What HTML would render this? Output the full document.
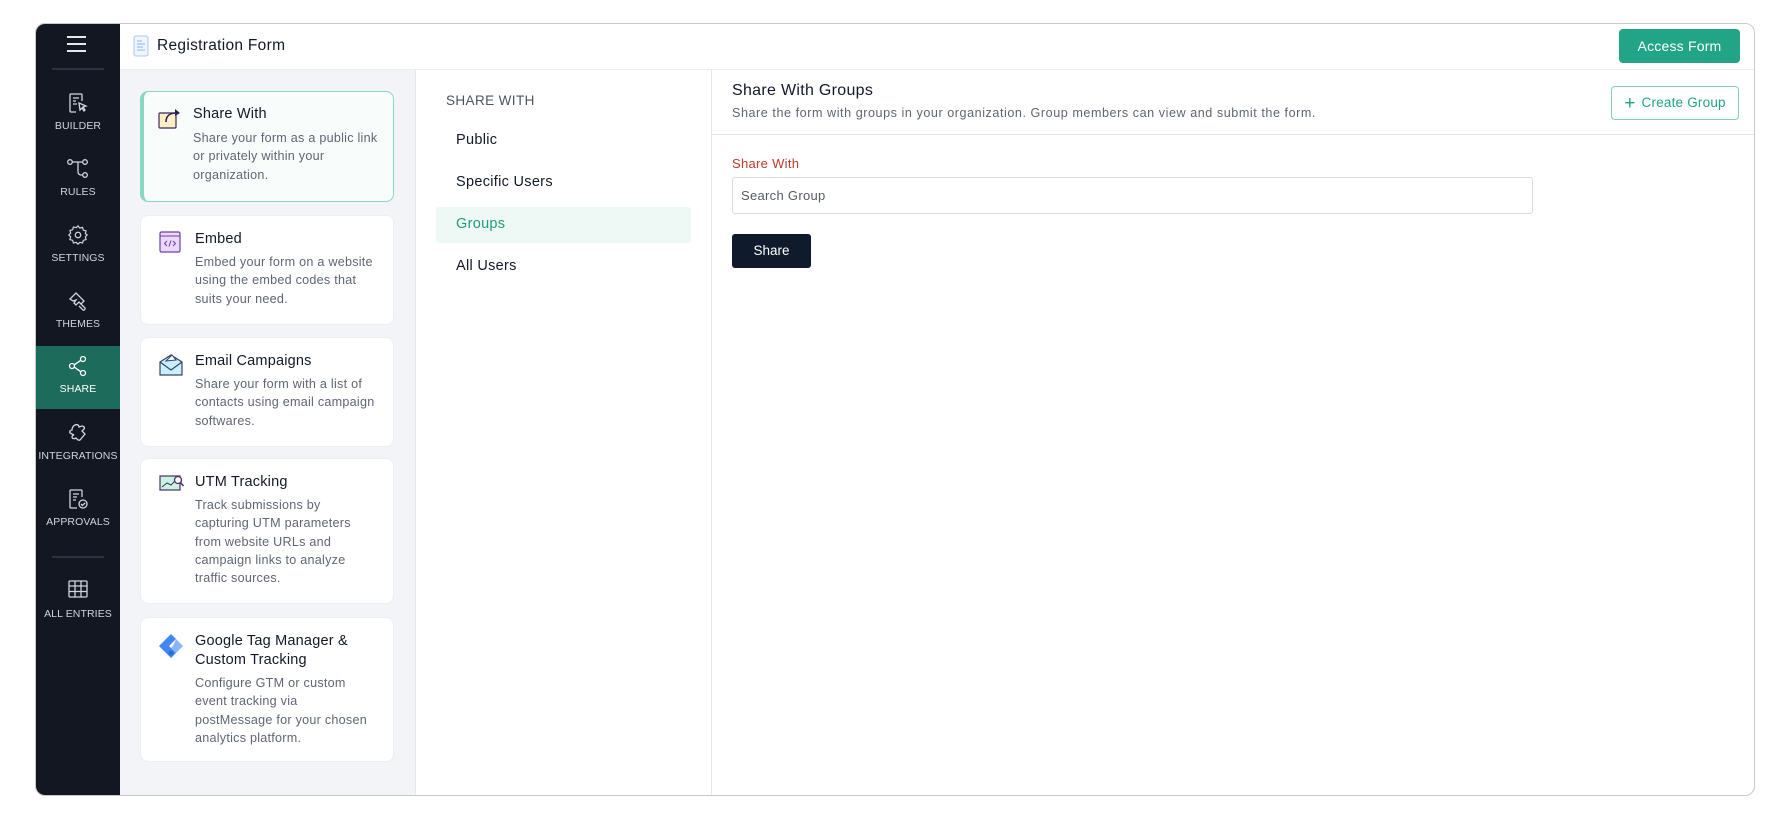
<!DOCTYPE html>
<html><head><meta charset="utf-8"><style>
*{box-sizing:border-box;margin:0;padding:0}
body{width:1791px;height:821px;background:#fff;font-family:"Liberation Sans",sans-serif;position:relative;overflow:hidden;color:#111827}
.frame{position:absolute;left:35px;top:23px;width:1720px;height:773px;border:1px solid #c9c9c9;border-radius:10px;overflow:hidden;background:#fff}
.side{position:absolute;left:0;top:0;width:84px;height:100%;background:#121722}
.abs{position:absolute}
.si{position:absolute;left:0;width:84px;text-align:center;color:#d1d5db;font-size:10.5px;letter-spacing:.1px}
.si svg{display:block;margin:0 auto}
.si .l{position:absolute;left:0;width:84px;text-align:center}
.card{position:absolute;left:104px;width:254px;background:#fff;border-radius:8px;border:1px solid #eceef1}
.card .t{position:absolute;left:54px;font-size:14.5px;color:#111827;line-height:19px;white-space:nowrap;letter-spacing:.2px}
.card .d{position:absolute;left:54px;font-size:12.6px;color:#5f6673;line-height:18.3px;white-space:nowrap;letter-spacing:.25px}
.card svg{position:absolute;left:18px}
.mi{position:absolute;left:420px;font-size:14.5px;color:#111827;letter-spacing:.3px}
</style></head><body>
<div class="frame">
 <div class="side">
  <div class="abs" style="left:31px;top:12px;width:19px;height:2px;background:#e5e7eb"></div>
  <div class="abs" style="left:31px;top:19px;width:19px;height:2px;background:#e5e7eb"></div>
  <div class="abs" style="left:31px;top:26px;width:19px;height:2px;background:#e5e7eb"></div>
  <div class="abs" style="left:16px;top:44px;width:52px;height:2px;background:#2d3340"></div>

  <div class="si" style="top:68px"><svg width="22" height="22" viewBox="0 0 22 22" fill="none" stroke="#d1d5db" stroke-width="1.3"><path d="M15 9V3a1 1 0 0 0-1-1H4a1 1 0 0 0-1 1v16a1 1 0 0 0 1 1h5"/><path d="M6 6h6M6 9h3M6 12h4"/><path d="M12 11l7 3-3 1 2 3-1 1-2-3-2 2z"/></svg><div class="l" style="top:28px">BUILDER</div></div>
  <div class="si" style="top:134px"><svg width="24" height="22" viewBox="0 0 24 22" fill="none" stroke="#d1d5db" stroke-width="1.3"><circle cx="4" cy="4" r="2.3"/><circle cx="19" cy="4" r="2.3"/><circle cx="19" cy="17" r="2.3"/><path d="M6.3 4h10.4M12 4v10a3 3 0 0 0 3 3h1.7"/></svg><div class="l" style="top:28px">RULES</div></div>
  <div class="si" style="top:200px"><svg width="22" height="22" viewBox="0 0 24 24" fill="none" stroke="#d1d5db" stroke-width="1.3"><circle cx="12" cy="12" r="3"/><path d="M12 2l2 2.5 3-.8.8 3 3 .8-.8 3L22 12l-2 2 .8 3-3 .8-.8 3-3-.8L12 22l-2-2-3 .8-.8-3-3-.8.8-3L2 12l2-2-.8-3 3-.8.8-3 3 .8z"/></svg><div class="l" style="top:28px">SETTINGS</div></div>
  <div class="si" style="top:266px"><svg width="22" height="22" viewBox="0 0 22 22" fill="none" stroke="#d1d5db" stroke-width="1.3"><path d="M3 9l6-6 8 8-3 3-2-2-3 3-2-2 2-3-3 1z"/><path d="M14 14l4 4a1.5 1.5 0 0 1-2 2l-4-4"/></svg><div class="l" style="top:28px">THEMES</div></div>
  <div class="abs" style="left:0;top:322px;width:84px;height:63px;background:#1c6b5b"></div>
  <div class="si" style="top:331px;color:#fff"><svg width="22" height="22" viewBox="0 0 22 22" fill="none" stroke="#fff" stroke-width="1.3"><circle cx="16" cy="4" r="2.5"/><circle cx="5" cy="11" r="2.5"/><circle cx="16" cy="18" r="2.5"/><path d="M7.3 9.8l6.5-4.5M7.3 12.2l6.5 4.5"/></svg><div class="l" style="top:28px">SHARE</div></div>
  <div class="si" style="top:398px"><svg width="22" height="22" viewBox="0 0 22 22" fill="none" stroke="#d1d5db" stroke-width="1.3"><path d="M8 3c2-1 4 0 4 2l3-1c2 0 3 2 2 3l-2 2 3 3-5 6c-2 1-3-1-4-2-1 1-4 1-4-1 0-1 1-2 2-2L3 11c-1-2 1-3 2-3 0-2 1-4 3-5z"/></svg><div class="l" style="top:28px">INTEGRATIONS</div></div>
  <div class="si" style="top:464px"><svg width="22" height="22" viewBox="0 0 22 22" fill="none" stroke="#d1d5db" stroke-width="1.3"><path d="M15 9V3a1 1 0 0 0-1-1H4a1 1 0 0 0-1 1v16a1 1 0 0 0 1 1h6"/><path d="M6 6h6M6 9h4M6 12h3"/><circle cx="16" cy="16" r="4"/><path d="M14 16l1.5 1.5L18 15"/></svg><div class="l" style="top:28px">APPROVALS</div></div>
  <div class="abs" style="left:16px;top:532px;width:52px;height:2px;background:#2d3340"></div>
  <div class="si" style="top:554px"><svg width="22" height="22" viewBox="0 0 22 22" fill="none" stroke="#d1d5db" stroke-width="1.3"><rect x="2" y="3" width="18" height="16" rx="1"/><path d="M2 8h18M2 13.5h18M8 3v16M14 3v16"/></svg><div class="l" style="top:30px">ALL ENTRIES</div></div>
 </div>

 <div class="abs" style="left:84px;top:0;right:0;height:46px;border-bottom:1px solid #eceef1;background:#fff"></div>
 <svg class="abs" style="left:97px;top:11px" width="16" height="22" viewBox="0 0 16 22"><rect x="1" y="1" width="14" height="20" rx="2" fill="#eef5ff" stroke="#a9c8f5"/><path d="M4 6h5M4 9h8M4 12h6M4 15h8" stroke="#8fb5ee"/></svg>
 <div class="abs" style="left:121px;top:13px;font-size:15.5px;color:#111827;letter-spacing:.3px">Registration Form</div>
 <div class="abs" style="left:1583px;top:5px;width:121px;height:34px;background:#22a586;border-radius:4px;color:#fff;font-size:14px;line-height:34px;text-align:center;letter-spacing:.2px">Access Form</div>

 <div class="abs" style="left:84px;top:46px;width:296px;bottom:0;background:#f3f4f7;border-right:1px solid #e5e7eb"></div>
 <div class="card" style="top:67px;height:111px;background:#f8fdfb;border:1.5px solid #8ad6c1;border-left:4px solid #8ad6c1">
  <svg style="top:14px;left:14px" width="26" height="24" viewBox="0 0 26 24"><rect x="1" y="7" width="17" height="15" rx="1" fill="#fdeec4" stroke="#3b2a5a" stroke-width="1.2"/><path d="M8 16c0-6 4-9 10-9" fill="none" stroke="#2a1f5e" stroke-width="1.6"/><path d="M17 3l5 4-5 3z" fill="#2a1f5e"/></svg>
  <div class="t" style="top:13px;left:49px">Share With</div>
  <div class="d" style="top:37px;left:49px">Share your form as a public link<br>or privately within your<br>organization.</div>
 </div>
 <div class="card" style="top:191px;height:110px">
  <svg style="top:15px" width="22" height="22" viewBox="0 0 22 22"><rect x="1" y="1" width="20" height="20" rx="1.5" fill="#ead9fb" stroke="#6d3fa3" stroke-width="1.2"/><path d="M1 5h20" stroke="#6d3fa3"/><path d="M8 10l-2.5 2.5L8 15M14 10l2.5 2.5L14 15M12 9.5l-2 6" fill="none" stroke="#6d3fa3" stroke-width="1"/></svg>
  <div class="t" style="top:14px">Embed</div>
  <div class="d" style="top:37px">Embed your form on a website<br>using the embed codes that<br>suits your need.</div>
 </div>
 <div class="card" style="top:313px;height:110px">
  <svg style="top:13px" width="24" height="26" viewBox="0 0 24 26"><path d="M1 11l11-7 11 7v13H1z" fill="#cbeefb" stroke="#33466e" stroke-width="1.2"/><path d="M7 10l6-6 4 5z" fill="#fff" stroke="#33466e"/><path d="M1 11l11 8 11-8" fill="none" stroke="#33466e" stroke-width="1.2"/></svg>
  <div class="t" style="top:14px">Email Campaigns</div>
  <div class="d" style="top:37px">Share your form with a list of<br>contacts using email campaign<br>softwares.</div>
 </div>
 <div class="card" style="top:434px;height:146px">
  <svg style="top:15px" width="26" height="20" viewBox="0 0 26 20"><rect x="1" y="2" width="20" height="14" fill="#c9f3df" stroke="#4b2f6b" stroke-width="1.2"/><path d="M3 13l5-4 4 2 5-5" fill="none" stroke="#4b2f6b"/><circle cx="19" cy="6" r="3.5" fill="#fff" stroke="#4b2f6b" stroke-width="1.3"/><path d="M21.5 8.5l3 3.5" stroke="#4b2f6b" stroke-width="1.5"/></svg>
  <div class="t" style="top:14px">UTM Tracking</div>
  <div class="d" style="top:37px">Track submissions by<br>capturing UTM parameters<br>from website URLs and<br>campaign links to analyze<br>traffic sources.</div>
 </div>
 <div class="card" style="top:593px;height:145px">
  <svg style="top:15px;left:17px" width="26" height="26" viewBox="0 0 26 26"><path d="M13 1l5 5-7 7 7 7-5 5-12-12z" fill="#4285f4"/><path d="M18 6l7 7-7 7-5-5 2-2z" fill="#8ab4f8"/><circle cx="13" cy="20" r="2.5" fill="#246fdb"/></svg>
  <div class="t" style="top:14px">Google Tag Manager &amp;<br>Custom Tracking</div>
  <div class="d" style="top:56px">Configure GTM or custom<br>event tracking via<br>postMessage for your chosen<br>analytics platform.</div>
 </div>

 <div class="abs" style="left:380px;top:46px;width:296px;bottom:0;border-right:1px solid #e5e7eb"></div>
 <div class="abs" style="left:410px;top:69px;font-size:13.5px;color:#4b5563;letter-spacing:.4px">SHARE WITH</div>
 <div class="mi" style="top:108px">Public</div>
 <div class="mi" style="top:150px">Specific Users</div>
 <div class="abs" style="left:400px;top:183px;width:255px;height:36px;background:#eef8f4;border-radius:3px"></div>
 <div class="mi" style="top:192px;color:#229b7c">Groups</div>
 <div class="mi" style="top:234px">All Users</div>

 <div class="abs" style="left:696px;top:58px;font-size:16px;color:#111827;letter-spacing:.3px">Share With Groups</div>
 <div class="abs" style="left:696px;top:82px;font-size:12.6px;color:#5f6673;letter-spacing:.55px">Share the form with groups in your organization. Group members can view and submit the form.</div>
 <div class="abs" style="left:1575px;top:62px;width:128px;height:34px;border:1.5px solid #7fcfba;border-radius:4px;color:#22a586;font-size:13.5px;line-height:31px;text-align:center;letter-spacing:.2px"><span style="font-size:19px;vertical-align:-2px;margin-right:6px">+</span>Create Group</div>
 <div class="abs" style="left:676px;top:110px;right:0;height:1px;background:#e5e7eb"></div>
 <div class="abs" style="left:696px;top:132px;font-size:13px;color:#c0392b;letter-spacing:.3px">Share With</div>
 <div class="abs" style="left:696px;top:153px;width:801px;height:37px;border:1px solid #d8dbe0;border-radius:3px;font-size:13px;color:#555b66;line-height:35px;padding-left:8px;letter-spacing:.3px">Search Group</div>
 <div class="abs" style="left:696px;top:210px;width:79px;height:34px;background:#0f1a2c;border-radius:3px;color:#fff;font-size:13.5px;line-height:34px;text-align:center">Share</div>
</div>
</body></html>
